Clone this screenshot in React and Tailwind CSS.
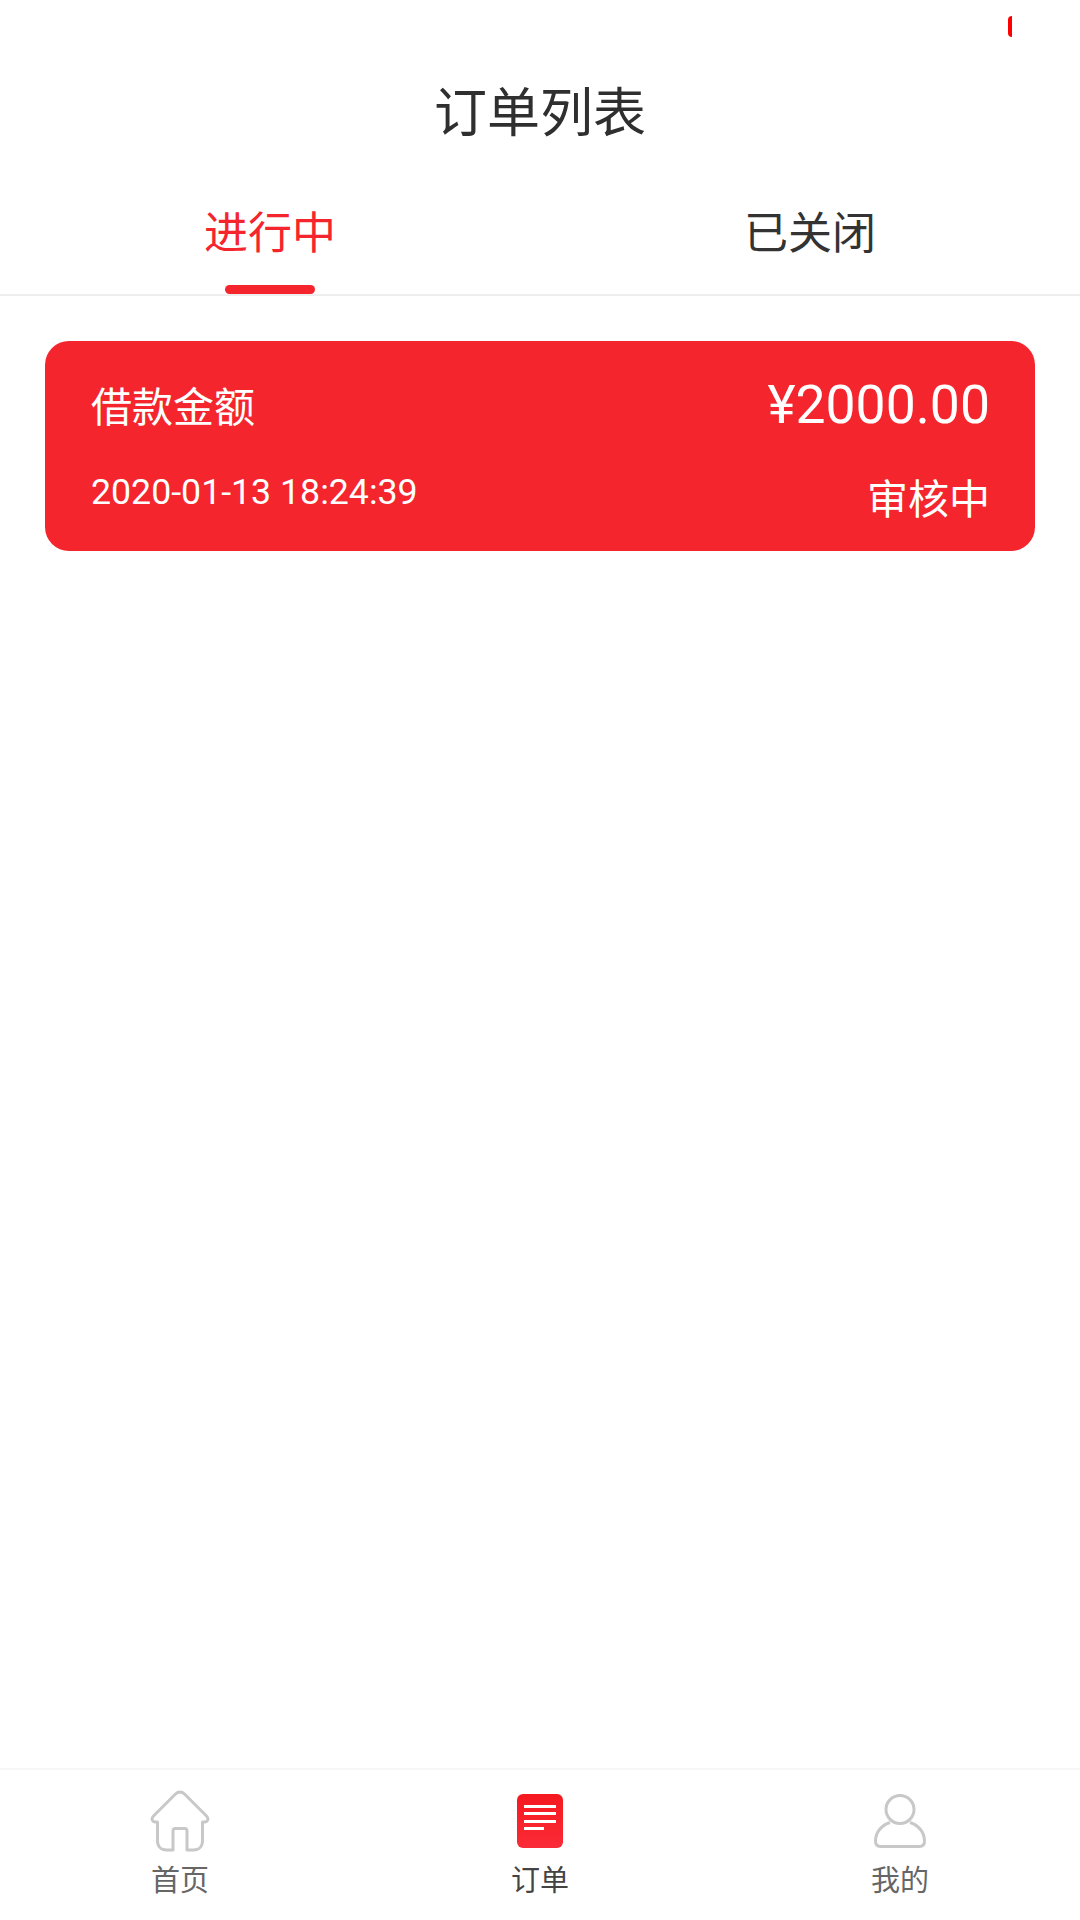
const FONT = { fontFamily: '"Roboto", "Noto Sans CJK SC", sans-serif' };

const HomeIcon = () => (
  <svg className="mt-[4px]" width="60" height="62" viewBox="0 0 60 62" fill="none" stroke="#c8c8c8" strokeWidth="3" strokeLinejoin="round">
    <path d="M25.500 4 3.500 26c-2.500 2.500-1.500 6 1.800 6h2.200v19c0 5.500 3.500 9 9 9H23V41c0-1.500.8-2.500 2.500-2.500h9c1.700 0 2.500 1 2.500 2.500v19h6.500c5.500 0 9-3.500 9-9V32h2.200c3.300 0 4.300-3.500 1.800-6L34.500 4c-2.700-2.600-6.300-2.600-9 0Z" />
  </svg>
);

const OrderIcon = () => (
  <svg className="mt-[8px]" width="46" height="54" viewBox="0 0 46 54">
    <defs>
      <linearGradient id="orderFill" x1="0" y1="0" x2="0" y2="1">
        <stop offset="0" stopColor="#f5191f" />
        <stop offset="1" stopColor="#fa2b38" />
      </linearGradient>
    </defs>
    <rect width="46" height="54" rx="6" fill="url(#orderFill)" />
    <g fill="#fff">
      <rect x="7" y="11" width="32" height="3" />
      <rect x="7" y="18" width="32" height="3" />
      <rect x="7" y="26" width="32" height="3" />
      <rect x="7" y="33" width="20" height="3" />
    </g>
  </svg>
);

const UserIcon = () => (
  <svg className="mt-[8px]" width="54" height="54" viewBox="0 0 54 54" fill="none" stroke="#c8c8c8" strokeWidth="3">
    <circle cx="27" cy="15.500" r="14" />
    <path d="M17 28.500C9 31 2.500 38 2.500 47c0 3.500 1.700 5.500 5 5.500h39c3.300 0 5-2 5-5.500 0-9-6.500-16-14.500-18.500" />
  </svg>
);

const NavItem = ({ icon, label, active }) => (
  <div className="flex flex-1 flex-col items-center">
    <div className="flex h-[64px] items-start justify-center">{icon}</div>
    <span className={`mt-[11px] text-[29px] leading-[40px] ${active ? 'text-[#444444]' : 'text-[#666666]'}`}>{label}</span>
  </div>
);

const App = () => {
  return (
    <div className="relative flex h-[1920px] w-[1080px] flex-col overflow-hidden bg-white" style={FONT}>
      {/* scrap of red at the top, cut off in the capture */}
      <div className="absolute left-[1008px] top-[16px] h-[21px] w-[4px] rounded-l-full bg-[#ff0000]" />

      <h1 className="pt-[81px] text-center text-[53px] font-normal leading-[66px] text-[#2f2f2f]">订单列表</h1>

      <div className="mt-[45px] flex h-[104px] border-b-2 border-[#eeeeee]">
        <div className="relative flex-1 pt-[12px] text-center text-[44px] leading-[60px] text-[#f5252d]">
          进行中
          <div className="absolute bottom-0 left-[225px] h-[9px] w-[90px] rounded-full bg-[#f5252d]" />
        </div>
        <div className="flex-1 pt-[12px] text-center text-[44px] leading-[60px] text-[#333333]">已关闭</div>
      </div>

      <div className="mx-[45px] mt-[45px] flex h-[210px] flex-col justify-between rounded-[24px] bg-[#f5252d] pb-[23px] pl-[46px] pr-[45px] pt-[31px] text-white">
        <div className="flex items-center justify-between">
          <span className="pt-[6px] text-[41px] leading-[60px]">借款金额</span>
          <span className="text-[53.500px] leading-[60px]">¥2000.00</span>
        </div>
        <div className="flex items-end justify-between">
          <span className="pb-[11px] text-[35.700px] leading-[50px]">2020-01-13 18:24:39</span>
          <span className="text-[41px] leading-[56px]">审核中</span>
        </div>
      </div>

      <div className="mt-auto flex h-[152px] border-t-2 border-[#f7f7f7] pt-[16px]">
        <NavItem icon={<HomeIcon />} label="首页" />
        <NavItem icon={<OrderIcon />} label="订单" active />
        <NavItem icon={<UserIcon />} label="我的" />
      </div>
    </div>
  );
};

export default App;
